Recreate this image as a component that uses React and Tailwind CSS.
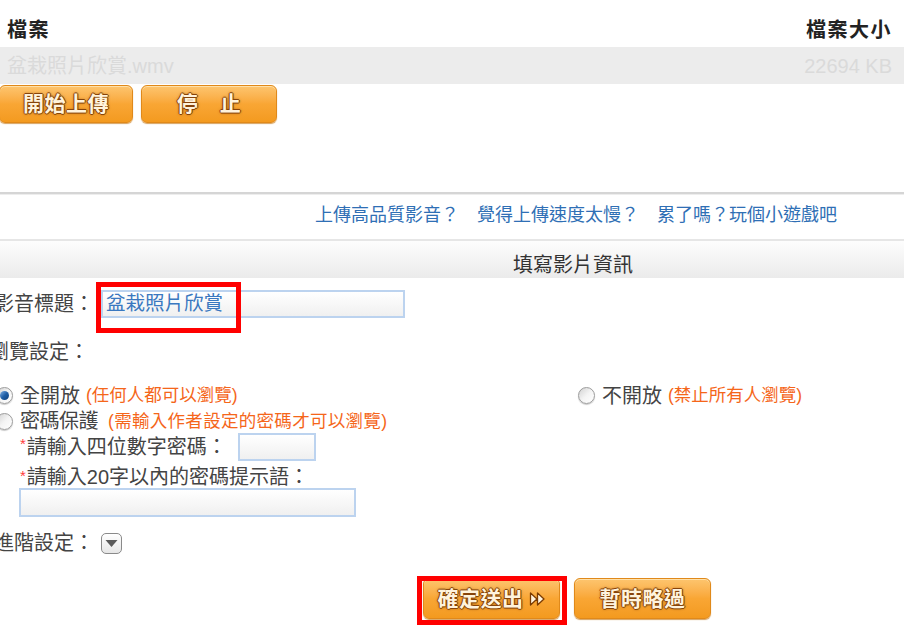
import React from 'react';

const FONT = { fontFamily: '"Liberation Sans", "Noto Sans CJK TC", sans-serif' };

function OrangeButton({ children, className = '' }) {
  return (
    <div
      className={`flex items-center justify-center rounded-[6px] border border-[#e0891a]
                  bg-gradient-to-b from-[#fdc56e] via-[#f9a634] to-[#f39a1f]
                  shadow-[inset_0_1px_0_#ffe0a8,0_1px_1px_#d7a25f]
                  text-[21px] font-bold text-[#fff3dc] tracking-[0.5px]
                  [text-shadow:1px_0_0_#86430a,-1px_0_0_#86430a,0_1px_0_#86430a,0_-1px_0_#86430a,0_0_3px_#7a3a00] ${className}`}
    >
      {children}
    </div>
  );
}

function Radio({ checked }) {
  return (
    <span className="relative inline-flex w-[17px] h-[17px] shrink-0 rounded-full border border-[#9c9c9c]
                     bg-gradient-to-br from-[#d2d2d2] via-[#f4f4f4] to-white items-center justify-center
                     shadow-[0_1px_1px_#c8c8c8]">
      {checked && (
        <span className="w-[9px] h-[9px] rounded-full bg-gradient-to-br from-[#7fb2e6] via-[#1f5fa6] to-[#0f3f7a]" />
      )}
    </span>
  );
}

function TextInput({ className = '', children }) {
  return (
    <div className={`border-2 border-[#bcd3ef] bg-gradient-to-b from-white to-[#f0f0f0] ${className}`}>
      {children}
    </div>
  );
}

function Star() {
  return <span className="text-[#ff3b3b] text-[15px] leading-none self-start mt-[3px]">*</span>;
}

export default function App() {
  return (
    <div style={FONT} className="w-[904px] h-[634px] overflow-hidden bg-white text-[#444]">
      {/* file table */}
      <div className="h-[47px] flex items-center justify-between pt-[13px] pl-[7px] pr-[12px]
                      text-[20px] font-bold text-[#222] tracking-[1.5px]">
        <span>檔案</span>
        <span>檔案大小</span>
      </div>
      <div className="h-[37px] flex items-center justify-between bg-[#ececec] pl-[7px] pr-[12px]
                      text-[20px] text-[#dadada]">
        <span>盆栽照片欣賞.wmv</span>
        <span>22694 KB</span>
      </div>

      <div className="flex gap-[8px] mt-[1px] ml-[-1px]">
        <OrangeButton className="w-[134px] h-[38px]">開始上傳</OrangeButton>
        <OrangeButton className="w-[136px] h-[38px]">停　止</OrangeButton>
      </div>

      <div className="mt-[69px] h-[2px] bg-[#d5d5d5]" />
      <div className="h-px bg-[#ededed]" />

      <div className="h-[44px] flex items-center pb-[4px] pl-[315px] gap-[18px] text-[18px] text-[#2f6fb5]">
        <span>上傳高品質影音？</span>
        <span>覺得上傳速度太慢？</span>
        <span>累了嗎？玩個小遊戲吧</span>
      </div>

      <div className="h-[2px] bg-[#e6e6e6]" />
      <div className="h-[37px] flex items-center pt-[10px] pl-[513px] bg-gradient-to-b from-[#fdfdfd] to-[#ebebeb]
                      text-[20px] text-[#333]">
        填寫影片資訊
      </div>

      {/* form */}
      <div className="ml-[-6px] text-[20px]">
        <div className="mt-[12px] h-[28px] flex items-center">
          <span className="w-[100px]">影音標題：</span>
          <div className="relative ml-[7px]">
            <TextInput className="w-[304px] h-[28px] flex items-center pl-[3px]">
              <span className="text-[#3a78c0] text-[19.5px] leading-none">盆栽照片欣賞</span>
            </TextInput>
            <div className="absolute left-[-5px] top-[-8px] w-[145px] h-[51px] border-[5px] border-[#ff0000]" />
          </div>
        </div>

        <div className="mt-[20px] h-[28px] flex items-center ml-[-5px]">瀏覽設定：</div>

        <div className="mt-[16px] h-[27px] flex items-center pl-[2px]">
          <div className="w-[582px] flex items-center">
            <Radio checked />
            <span className="ml-[7px]">全開放</span>
            <span className="ml-[6px] text-[17.5px] text-[#f5661a]">(任何人都可以瀏覽)</span>
          </div>
          <div className="flex items-center">
            <Radio />
            <span className="ml-[7px]">不開放</span>
            <span className="ml-[6px] text-[17.5px] text-[#f5661a]">(禁止所有人瀏覽)</span>
          </div>
        </div>

        <div className="h-[24px] flex items-center pl-[2px]">
          <Radio />
          <span className="ml-[7px] tracking-[-0.5px]">密碼保護</span>
          <span className="ml-[10px] text-[17.5px] text-[#f5661a] tracking-[0.3px]">(需輸入作者設定的密碼才可以瀏覽)</span>
        </div>

        <div className="h-[28px] flex items-center pl-[26px]">
          <Star />
          <span className="ml-[1px]">請輸入四位數字密碼：</span>
          <TextInput className="ml-[11px] w-[78px] h-[28px]" />
        </div>

        <div className="h-[27px] flex items-center pt-[4px] pl-[26px]">
          <Star />
          <span className="ml-[1px]">請輸入20字以內的密碼提示語：</span>
        </div>

        <div className="pl-[25px]">
          <TextInput className="w-[337px] h-[29px]" />
        </div>

        <div className="mt-[12px] h-[28px] flex items-center">
          <span className="w-[100px]">進階設定：</span>
          <span className="ml-[7px] w-[21px] h-[21px] rounded-[5px] border border-[#8a8a8a]
                           bg-gradient-to-b from-white to-[#e6e6e6] flex items-center justify-center">
            <svg width="13" height="9" viewBox="0 0 13 9">
              <path d="M0.5 1 L12.5 1 L6.5 8 Z" fill="#5a5a5a" />
            </svg>
          </span>
        </div>
      </div>

      <div className="mt-[21px] flex gap-[14px] pl-[423px]">
        <div className="relative">
          <OrangeButton className="w-[137px] h-[41px] gap-[5px]">
            確定送出
            <svg width="17" height="16" viewBox="0 0 17 16">
              <path d="M1.5 2 L8 8 L1.5 14 Z M8.5 2 L15 8 L8.5 14 Z" fill="#fff3dc" stroke="#7a3a00" strokeWidth="1.3" strokeLinejoin="round" />
            </svg>
          </OrangeButton>
          <div className="absolute left-[-6px] right-[-7px] top-[-2px] bottom-[-6px] border-[5px] border-[#ff0000]" />
        </div>
        <OrangeButton className="w-[137px] h-[41px]">暫時略過</OrangeButton>
      </div>
    </div>
  );
}
